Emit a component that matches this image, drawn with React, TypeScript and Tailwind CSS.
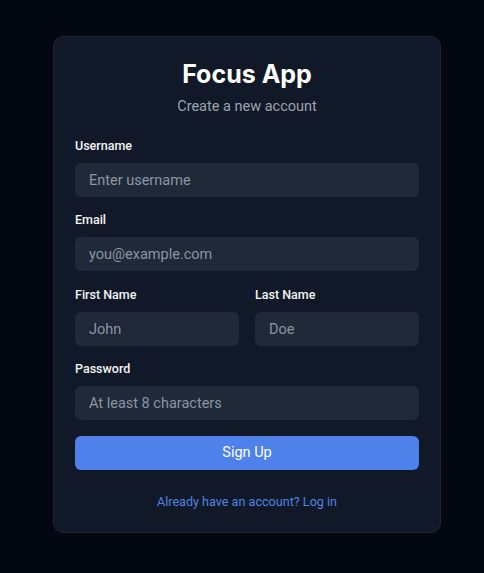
interface FieldProps {
  label: string;
  placeholder: string;
  type?: string;
}

function Field({ label, placeholder, type = "text" }: FieldProps) {
  return (
    <div className="flex flex-col flex-1 min-w-0">
      <label className="text-[12.5px] leading-[18px] font-medium text-gray-100 mb-[8px]">{label}</label>
      <input
        type={type}
        placeholder={placeholder}
        className="h-[34px] w-full rounded-[6px] bg-[#1f2937] px-[14px] text-[14.5px] text-gray-100 placeholder:text-[#8c95a3] outline-none"
      />
    </div>
  );
}

export default function App() {
  return (
    <div
      className="min-h-[573px] w-full bg-[#030712] pt-[36px] pl-[53px]"
      style={{ fontFamily: "Roboto, 'Noto Sans', sans-serif" }}
    >
      <div className="w-[388px] h-[497px] rounded-[10px] border border-[#1f2633] bg-[#111827] px-[21px] pt-[21px] pb-[21px] flex flex-col">
        <h1 className="text-center text-[25px] leading-[32px] font-bold text-white font-['Inter',sans-serif]">
          Focus App
        </h1>
        <p className="text-center text-[14.5px] leading-[20px] text-[#9ca3af] mt-[7px]">Create a new account</p>

        <form className="flex flex-col mt-[20px]" onSubmit={(e) => e.preventDefault()}>
          <Field label="Username" placeholder="Enter username" />
          <div className="mt-[14px]">
            <Field label="Email" placeholder="you@example.com" type="email" />
          </div>
          <div className="mt-[15px] flex gap-[16px]">
            <Field label="First Name" placeholder="John" />
            <Field label="Last Name" placeholder="Doe" />
          </div>
          <div className="mt-[14px]">
            <Field label="Password" placeholder="At least 8 characters" type="password" />
          </div>
          <button
            type="submit"
            className="mt-[16px] h-[34px] w-full rounded-[6px] bg-[#4f81ea] text-[14.5px] text-white"
          >
            Sign Up
          </button>
        </form>

        <p className="mt-[23px] text-center text-[12.6px] leading-[18px] text-[#4d85e3]">
          Already have an account? Log in
        </p>
      </div>
    </div>
  );
}
